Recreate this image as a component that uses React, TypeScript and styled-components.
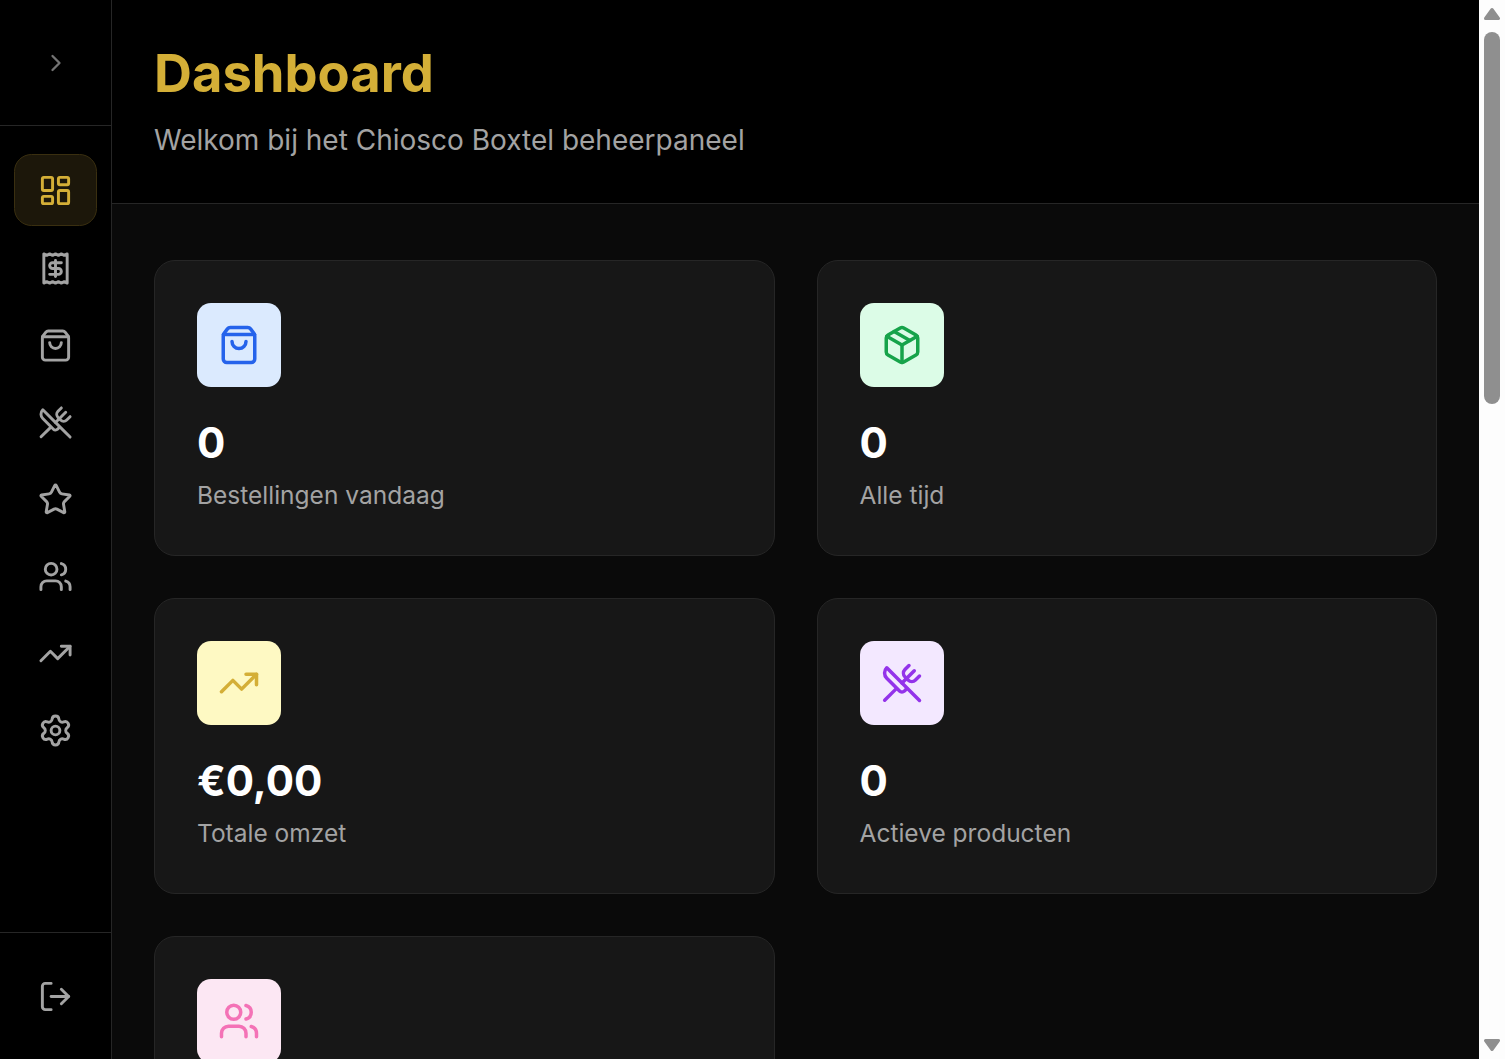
import React, { FunctionComponent } from "react";
import styled, { createGlobalStyle } from "styled-components";
import {
    ChevronRight,
    LayoutDashboard,
    LogOut,
    LucideIcon,
    Package,
    Receipt,
    Settings,
    ShoppingBag,
    Star,
    TrendingUp,
    UtensilsCrossed,
    Users,
} from "lucide-react";

const GlobalStyle = createGlobalStyle`
    * {
        box-sizing: border-box;
    }
    html, body {
        height: 100%;
        overflow: hidden;
    }
    body {
        margin: 0;
        background-color: #0a0a0a;
        font-family: "Inter", "Liberation Sans", sans-serif;
        color: #ffffff;
    }
`;

const Shell = styled.div`
    display: flex;
    height: 100vh;
    overflow: hidden;
    background-color: #0a0a0a;
`;

const Sidebar = styled.aside`
    display: flex;
    flex-direction: column;
    flex: 0 0 112px;
    background-color: #000000;
    border-right: 1px solid #262626;
`;

const SidebarTop = styled.div`
    display: flex;
    align-items: center;
    justify-content: center;
    flex: 0 0 126px;
    color: #737373;
    border-bottom: 1px solid #262626;
`;

const Nav = styled.nav`
    display: flex;
    flex-direction: column;
    gap: 5px;
    flex: 1;
    padding: 28px 14px 0;
`;

const NavItem = styled.a<{ $active?: boolean }>`
    display: flex;
    align-items: center;
    justify-content: center;
    height: 72px;
    padding-top: ${(p) => (p.$active ? "1px" : "3px")};
    border-radius: 17.5px;
    border: 1px solid ${(p) => (p.$active ? "#3a2f10" : "transparent")};
    background-color: ${(p) => (p.$active ? "#1c170a" : "transparent")};
    color: ${(p) => (p.$active ? "#d4af37" : "#a3a3a3")};
`;

const SidebarBottom = styled.div`
    display: flex;
    align-items: center;
    justify-content: center;
    flex: 0 0 127px;
    color: #a3a3a3;
    border-top: 1px solid #262626;
`;

const Main = styled.main`
    flex: 1;
    min-width: 0;
    overflow: hidden;
`;

const Header = styled.header`
    padding: 42px;
    background-color: #000000;
    border-bottom: 1px solid #262626;
`;

const Title = styled.h1`
    margin: 0;
    font-size: 52.5px;
    line-height: 63px;
    font-weight: 700;
    color: #d4af37;
`;

const Subtitle = styled.p`
    margin: 14px 0 0;
    font-size: 28px;
    line-height: 42px;
    color: #a3a3a3;
`;

const Grid = styled.section`
    display: grid;
    grid-template-columns: 1fr 1fr;
    gap: 42px;
    padding: 56px 42px 42px;
`;

const Card = styled.article`
    height: 296px;
    padding: 42px;
    background-color: #171717;
    border: 1px solid #262626;
    border-radius: 21px;
`;

const IconBox = styled.div<{ $bg: string; $fg: string }>`
    display: flex;
    align-items: center;
    justify-content: center;
    width: 84px;
    height: 84px;
    margin-bottom: 28px;
    border-radius: 14px;
    background-color: ${(p) => p.$bg};
    color: ${(p) => p.$fg};
`;

const Value = styled.div`
    font-size: 42px;
    line-height: 56px;
    font-weight: 700;
    color: #ffffff;
`;

const Label = styled.div`
    margin-top: 7px;
    font-size: 24.5px;
    line-height: 35px;
    color: #a3a3a3;
`;

const Scrollbar = styled.div`
    display: flex;
    flex-direction: column;
    flex: 0 0 26px;
    background-color: #fdfdfd;
`;

const ScrollButton = styled.div`
    display: flex;
    justify-content: center;
    flex: 0 0 32px;
    color: #8f8f8f;
`;

const ScrollTrack = styled.div`
    flex: 1;
    padding: 0 5px;
`;

const ScrollThumb = styled.div`
    height: 372px;
    border-radius: 8px;
    background-color: #8f8f8f;
`;

interface Stat {
    icon: LucideIcon;
    bg: string;
    fg: string;
    value?: string;
    label?: string;
}

const navItems: LucideIcon[] = [LayoutDashboard, Receipt, ShoppingBag, UtensilsCrossed, Star, Users, TrendingUp, Settings];

const stats: Stat[] = [
    { icon: ShoppingBag, bg: "#dbeafe", fg: "#2563eb", value: "0", label: "Bestellingen vandaag" },
    { icon: Package, bg: "#dcfce7", fg: "#16a34a", value: "0", label: "Alle tijd" },
    { icon: TrendingUp, bg: "#fef9c3", fg: "#d4af37", value: "€0,00", label: "Totale omzet" },
    { icon: UtensilsCrossed, bg: "#f3e8ff", fg: "#9333ea", value: "0", label: "Actieve producten" },
    { icon: Users, bg: "#fce7f3", fg: "#f472b6" },
];

const App: FunctionComponent = () => {
    return (
        <>
            <GlobalStyle />
            <Shell>
                <Sidebar>
                    <SidebarTop>
                        <ChevronRight size={28} />
                    </SidebarTop>
                    <Nav>
                        {navItems.map((Icon, i) => (
                            <NavItem key={i} $active={i === 0}>
                                <Icon size={35} />
                            </NavItem>
                        ))}
                    </Nav>
                    <SidebarBottom>
                        <LogOut size={35} />
                    </SidebarBottom>
                </Sidebar>
                <Main>
                    <Header>
                        <Title>Dashboard</Title>
                        <Subtitle>Welkom bij het Chiosco Boxtel beheerpaneel</Subtitle>
                    </Header>
                    <Grid>
                        {stats.map((stat, i) => (
                            <Card key={i}>
                                <IconBox $bg={stat.bg} $fg={stat.fg}>
                                    <stat.icon size={42} />
                                </IconBox>
                                {stat.value && <Value>{stat.value}</Value>}
                                {stat.label && <Label>{stat.label}</Label>}
                            </Card>
                        ))}
                    </Grid>
                </Main>
                <Scrollbar>
                    <ScrollButton>
                        <svg width="16" height="32" viewBox="0 0 16 32">
                            <path d="M8 9.5 14.5 18.5 H1.5 Z" fill="currentColor" stroke="currentColor" strokeWidth="3" strokeLinejoin="round" />
                        </svg>
                    </ScrollButton>
                    <ScrollTrack>
                        <ScrollThumb />
                    </ScrollTrack>
                    <ScrollButton>
                        <svg width="16" height="32" viewBox="0 0 16 32">
                            <path d="M8 22.5 14.5 13.5 H1.5 Z" fill="currentColor" stroke="currentColor" strokeWidth="3" strokeLinejoin="round" />
                        </svg>
                    </ScrollButton>
                </Scrollbar>
            </Shell>
        </>
    );
};

export default App;
